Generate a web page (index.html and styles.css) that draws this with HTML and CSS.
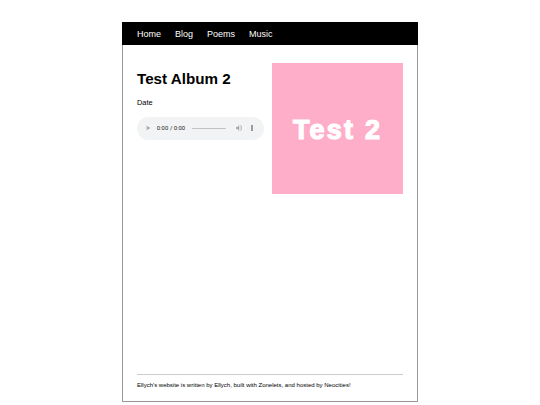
FILE: index.html
```html
<!DOCTYPE html>
<html lang="en">
<head>
<meta charset="utf-8">
<title>Test Album 2</title>
<link rel="stylesheet" href="styles.css">
</head>
<body>
<div class="page">
  <nav class="nav">
    <a href="#">Home</a>
    <a href="#">Blog</a>
    <a href="#">Poems</a>
    <a href="#">Music</a>
  </nav>
  <main class="main">
    <section class="album">
      <div class="info">
        <h1 class="title">Test Album 2</h1>
        <p class="date">Date</p>
        <audio class="player" controls></audio>
      </div>
      <div class="cover">Test 2</div>
    </section>
    <footer class="footer">Ellych's website is written by Ellych, built with Zonelets, and hosted by Neocities!</footer>
  </main>
</div>
</body>
</html>
```
FILE: styles.css
```css
html, body {
  margin: 0;
  padding: 0;
  background: #fff;
}
body {
  font-family: "Liberation Sans", Arial, sans-serif;
  color: #000;
}
.page {
  width: 296px;
  margin: 22px 0 0 122px;
}
.nav {
  height: 23px;
  background: #000;
  display: flex;
  align-items: center;
  gap: 14px;
  padding-left: 15px;
}
.nav a {
  color: #fff;
  text-decoration: none;
  font-size: 9px;
}
.main {
  box-sizing: border-box;
  height: 357px;
  border: 1px solid #999;
  border-top: none;
  padding: 18px 14px 0 14px;
  display: flex;
  flex-direction: column;
}
.album {
  display: flex;
  justify-content: space-between;
  align-items: flex-start;
}
.info {
  display: flex;
  flex-direction: column;
  align-items: flex-start;
}
.title {
  margin: 6.7px 0 0;
  font-size: 15.2px;
  font-weight: bold;
}
.date {
  margin: 11.5px 0 0;
  font-size: 7.4px;
}
.player {
  zoom: 0.421875;
  margin-top: 24px;
  display: block;
}
.cover {
  box-sizing: border-box;
  width: 131px;
  height: 131px;
  padding-top: 3px;
  background: #ffaec9;
  color: #fff;
  display: flex;
  align-items: center;
  justify-content: center;
  font-size: 27px;
  font-weight: bold;
  letter-spacing: 2.2px;
  -webkit-text-stroke: 1.2px #fff;
}
.footer {
  margin-top: auto;
  border-top: 1px solid #ccc;
  padding: 6.6px 0 13.5px;
  font-size: 6px;
}
```
